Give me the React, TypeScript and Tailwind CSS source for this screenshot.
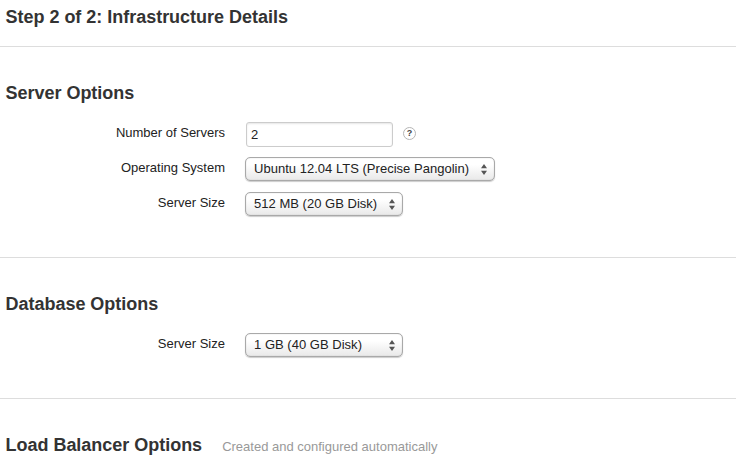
import type { ReactNode } from "react";

function Heading({ children }: { children: ReactNode }) {
  return <h2 className="h-5 text-[18px] leading-5 font-bold tracking-[-0.02px] whitespace-nowrap text-[#333]">{children}</h2>;
}

function Section({ title, note, children }: { title: string; note?: string; children?: ReactNode }) {
  return (
    <section className="border-t border-[#ddd] pt-9 pb-[37px]">
      <div className="flex items-baseline gap-5 pl-[5.5px]">
        <Heading>{title}</Heading>
        {note && <span className="text-[13px] leading-5 text-[#999]">{note}</span>}
      </div>
      {children && <div className="mt-3">{children}</div>}
    </section>
  );
}

function Row({ label, children }: { label: string; children: ReactNode }) {
  return (
    <div className="flex h-[35px] items-start">
      <div className="mr-5 w-[225px] pt-[10px] text-right text-[13px] leading-4 text-[#222]">{label}</div>
      <div className="flex pt-[7px]">{children}</div>
    </div>
  );
}

function Select({ value, width }: { value: string; width: string }) {
  return (
    <button
      type="button"
      className={`flex h-6 items-center justify-between rounded-[5px] border-[1.5px] border-[#a9a9a9] bg-gradient-to-b from-white from-30% to-[#e9e9e9] pr-[7px] pb-px pl-[8px] text-[13px] leading-4 tracking-[0.02px] whitespace-nowrap text-[#222] shadow-[0_1px_1px_rgba(0,0,0,0.2),inset_0_0_1px_rgba(0,0,0,0.3)] ${width}`}
    >
      {value}
      <svg width="6" height="11" viewBox="0 0 6 11" className="mt-px shrink-0" fill="#555">
        <path d="M3 0 6 4.3H0zM3 11 0 6.7h6z" />
      </svg>
    </button>
  );
}

export default function App() {
  return (
    <main className="h-[466px] w-full overflow-hidden bg-white font-['Liberation_Sans',Arial,sans-serif]">
      <header className="h-[46px] pt-[7px] pl-[5.5px]">
        <Heading>Step 2 of 2: Infrastructure Details</Heading>
      </header>
      <Section title="Server Options">
        <Row label="Number of Servers">
          <input
            type="text"
            defaultValue="2"
            className="ml-px h-[25px] w-[147px] rounded-[3px] border border-[#ccc] px-[4px] text-[13px] text-[#222] shadow-[inset_0_1px_2px_rgba(0,0,0,0.1)] outline-none"
          />
          <span className="mt-[5px] ml-[10px] flex h-[13px] w-[13px] items-center justify-center rounded-full border border-[#b5b5b5] text-[9px] leading-none font-bold text-[#444]">
            ?
          </span>
        </Row>
        <Row label="Operating System">
          <Select value="Ubuntu 12.04 LTS (Precise Pangolin)" width="w-[250px]" />
        </Row>
        <Row label="Server Size">
          <Select value="512 MB (20 GB Disk)" width="w-[158px]" />
        </Row>
      </Section>
      <Section title="Database Options">
        <Row label="Server Size">
          <Select value="1 GB (40 GB Disk)" width="w-[158px]" />
        </Row>
      </Section>
      <Section title="Load Balancer Options" note="Created and configured automatically" />
    </main>
  );
}
